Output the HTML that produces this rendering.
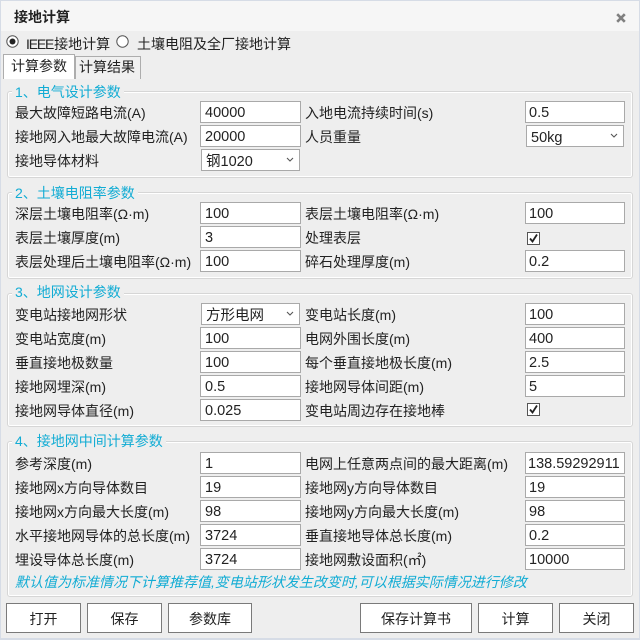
<!DOCTYPE html>
<html>
<head>
<meta charset="utf-8">
<style>
html,body{margin:0;padding:0}
body{width:640px;height:640px;position:relative;overflow:hidden;background:#eeeeee;font-family:"Liberation Sans","Noto Sans CJK SC",sans-serif;font-size:14px;color:#222}
div,span{position:absolute;box-sizing:border-box;white-space:nowrap}
.l{line-height:20px;height:20px}
.i{background:#fff;border:1px solid #a9a9a9;height:22px;width:101px;line-height:22px;padding-left:4px;font-size:14.5px;color:#222}
.r{left:525px;width:100px;padding-left:3px}
.a{left:200px}
.s{background:#fff;border:1px solid #a9a9a9;height:22px;left:201px;width:99px;line-height:24px;padding-left:4px;font-size:14.5px}
.s svg{position:absolute;right:5px;top:7px}
.g{left:7px;width:626px;border:1px solid #d6d6d6;box-shadow:inset 0 0 0 1px #fff;border-radius:3px}
.t{color:#12acd4;font-size:14px;background:#eeeeee;left:12px;padding:0 3px;line-height:20px;height:20px}
.b{background:#fff;border:1px solid #7a7a7a;top:603px;height:30px;line-height:30px;text-align:center;font-size:14px;color:#222}
.c{left:527px;width:13px;height:13px;background:#fff;border:1px solid #555}
.c svg{position:absolute;left:0;top:0}
i.n{font-style:normal;letter-spacing:-1.2px;margin-right:1px}
</style>
</head>
<body>
<div style="left:0;top:0;width:640px;height:31px;background:#f6f6f6"></div>
<div style="left:0;top:0;width:640px;height:640px;border:1px solid #d6dce6;border-bottom-width:2px"></div>
<div class="l" style="left:14px;top:7px;font-weight:bold;color:#222">接地计算</div>
<svg style="position:absolute;left:616px;top:13px" width="10" height="10" viewBox="0 0 10 10"><path d="M1.2 1.2L8.8 8.8M8.8 1.2L1.2 8.8" stroke="#808080" stroke-width="2.6"/></svg>

<svg style="position:absolute;left:6px;top:35px" width="13" height="13" viewBox="0 0 13 13"><circle cx="6.5" cy="6.5" r="5.7" fill="#fff" stroke="#555"/><circle cx="6.5" cy="6.5" r="3" fill="#222"/></svg>
<div class="l" style="left:26px;top:34px"><i class="n">IEEE</i>接地计算</div>
<svg style="position:absolute;left:116px;top:35px" width="13" height="13" viewBox="0 0 13 13"><circle cx="6.5" cy="6.5" r="5.7" fill="#fff" stroke="#555"/></svg>
<div class="l" style="left:137px;top:34px">土壤电阻及全厂接地计算</div>

<div style="left:75px;top:56px;width:66px;height:23px;background:#f0f0f0;border:1px solid #adadad;border-bottom:none"></div>
<div style="left:3px;top:54px;width:72px;height:25px;background:#fff;border:1px solid #adadad;border-bottom:none"></div>
<div class="l" style="left:11px;top:56px">计算参数</div>
<div class="l" style="left:79px;top:57px">计算结果</div>

<div class="g" style="top:91px;height:87px"></div>
<div class="g" style="top:192px;height:87px"></div>
<div class="g" style="top:293px;height:134px"></div>
<div class="g" style="top:441px;height:156px"></div>

<div class="t" style="top:82px">1、电气设计参数</div>
<div class="t" style="top:183px">2、土壤电阻率参数</div>
<div class="t" style="top:282px">3、地网设计参数</div>
<div class="t" style="top:431px">4、接地网中间计算参数</div>

<div class="l" style="left:15px;top:103px">最大故障短路电流(A)</div>
<div class="i a" style="top:101px">40000</div>
<div class="l" style="left:305px;top:103px">入地电流持续时间(s)</div>
<div class="i r" style="top:101px">0.5</div>

<div class="l" style="left:15px;top:127px">接地网入地最大故障电流(A)</div>
<div class="i a" style="top:125px">20000</div>
<div class="l" style="left:305px;top:127px">人员重量</div>
<div class="s" style="left:526px;width:98px;top:125px">50kg<svg width="8" height="6" viewBox="0 0 8 6"><path d="M1 1L4 4L7 1" fill="none" stroke="#555" stroke-width="1.1"/></svg></div>

<div class="l" style="left:15px;top:151px">接地导体材料</div>
<div class="s" style="top:149px">钢1020<svg width="8" height="6" viewBox="0 0 8 6"><path d="M1 1L4 4L7 1" fill="none" stroke="#555" stroke-width="1.1"/></svg></div>

<div class="l" style="left:15px;top:204px">深层土壤电阻率(Ω·m)</div>
<div class="i a" style="top:202px">100</div>
<div class="l" style="left:305px;top:204px">表层土壤电阻率(Ω·m)</div>
<div class="i r" style="top:202px">100</div>

<div class="l" style="left:15px;top:228px">表层土壤厚度(m)</div>
<div class="i a" style="top:226px">3</div>
<div class="l" style="left:305px;top:228px">处理表层</div>
<div class="c" style="top:232px"><svg width="11" height="11" viewBox="0 0 11 11"><path d="M2 5.5L4.5 8.5L9 1.5" fill="none" stroke="#222" stroke-width="1.8"/></svg></div>

<div class="l" style="left:15px;top:252px">表层处理后土壤电阻率(Ω·m)</div>
<div class="i a" style="top:250px">100</div>
<div class="l" style="left:305px;top:252px">碎石处理厚度(m)</div>
<div class="i r" style="top:250px">0.2</div>

<div class="l" style="left:15px;top:305px">变电站接地网形状</div>
<div class="s" style="top:303px">方形电网<svg width="8" height="6" viewBox="0 0 8 6"><path d="M1 1L4 4L7 1" fill="none" stroke="#555" stroke-width="1.1"/></svg></div>
<div class="l" style="left:305px;top:305px">变电站长度(m)</div>
<div class="i r" style="top:303px">100</div>

<div class="l" style="left:15px;top:329px">变电站宽度(m)</div>
<div class="i a" style="top:327px">100</div>
<div class="l" style="left:305px;top:329px">电网外围长度(m)</div>
<div class="i r" style="top:327px">400</div>

<div class="l" style="left:15px;top:353px">垂直接地极数量</div>
<div class="i a" style="top:351px">100</div>
<div class="l" style="left:305px;top:353px">每个垂直接地极长度(m)</div>
<div class="i r" style="top:351px">2.5</div>

<div class="l" style="left:15px;top:377px">接地网埋深(m)</div>
<div class="i a" style="top:375px">0.5</div>
<div class="l" style="left:305px;top:377px">接地网导体间距(m)</div>
<div class="i r" style="top:375px">5</div>

<div class="l" style="left:15px;top:401px">接地网导体直径(m)</div>
<div class="i a" style="top:399px">0.025</div>
<div class="l" style="left:305px;top:401px">变电站周边存在接地棒</div>
<div class="c" style="top:403px"><svg width="11" height="11" viewBox="0 0 11 11"><path d="M2 5.5L4.5 8.5L9 1.5" fill="none" stroke="#222" stroke-width="1.8"/></svg></div>

<div class="l" style="left:15px;top:454px">参考深度(m)</div>
<div class="i a" style="top:452px">1</div>
<div class="l" style="left:305px;top:454px">电网上任意两点间的最大距离(m)</div>
<div class="i r" style="top:452px;padding-left:2px">138.59292911</div>

<div class="l" style="left:15px;top:478px">接地网x方向导体数目</div>
<div class="i a" style="top:476px">19</div>
<div class="l" style="left:305px;top:478px">接地网y方向导体数目</div>
<div class="i r" style="top:476px">19</div>

<div class="l" style="left:15px;top:502px">接地网x方向最大长度(m)</div>
<div class="i a" style="top:500px">98</div>
<div class="l" style="left:305px;top:502px">接地网y方向最大长度(m)</div>
<div class="i r" style="top:500px">98</div>

<div class="l" style="left:15px;top:526px">水平接地网导体的总长度(m)</div>
<div class="i a" style="top:524px">3724</div>
<div class="l" style="left:305px;top:526px">垂直接地导体总长度(m)</div>
<div class="i r" style="top:524px">0.2</div>

<div class="l" style="left:15px;top:550px">埋设导体总长度(m)</div>
<div class="i a" style="top:548px">3724</div>
<div class="l" style="left:305px;top:550px">接地网敷设面积(㎡)</div>
<div class="i r" style="top:548px">10000</div>

<div class="l" style="left:15px;top:572px;color:#12acd4;font-style:italic;font-size:14px">默认值为标准情况下计算推荐值,变电站形状发生改变时,可以根据实际情况进行修改</div>

<div class="b" style="left:6px;width:75px">打开</div>
<div class="b" style="left:87px;width:75px">保存</div>
<div class="b" style="left:168px;width:84px">参数库</div>
<div class="b" style="left:360px;width:112px">保存计算书</div>
<div class="b" style="left:478px;width:75px">计算</div>
<div class="b" style="left:559px;width:75px">关闭</div>
</body>
</html>
